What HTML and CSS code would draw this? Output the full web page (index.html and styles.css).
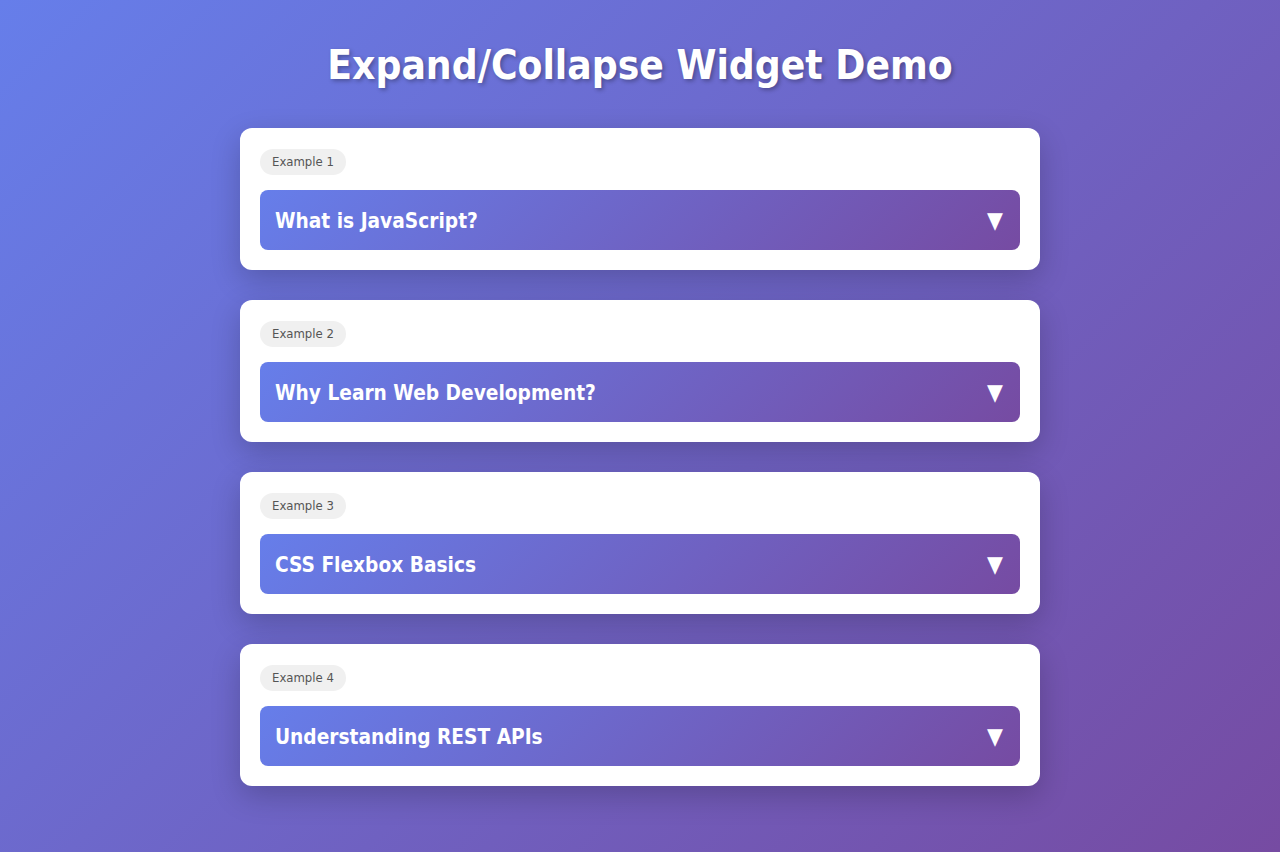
FILE: index.html
```html
<!DOCTYPE html>
<html lang="en">
<head>
<meta charset="utf-8">
<title>Expand/Collapse Widget Demo</title>
<link rel="stylesheet" href="styles.css">
</head>
<body>
<div class="page">
  <h1 class="title">Expand/Collapse Widget Demo</h1>
  <div class="list">
    <div class="card">
      <span class="badge">Example 1</span>
      <div class="header"><span class="label">What is JavaScript?</span><span class="arrow">▼</span></div>
    </div>
    <div class="card">
      <span class="badge">Example 2</span>
      <div class="header"><span class="label">Why Learn Web Development?</span><span class="arrow">▼</span></div>
    </div>
    <div class="card">
      <span class="badge">Example 3</span>
      <div class="header"><span class="label">CSS Flexbox Basics</span><span class="arrow">▼</span></div>
    </div>
    <div class="card">
      <span class="badge">Example 4</span>
      <div class="header"><span class="label">Understanding REST APIs</span><span class="arrow">▼</span></div>
    </div>
  </div>
</div>
</body>
</html>
```

FILE: styles.css
```css
html, body {
  margin: 0;
  padding: 0;
}
body {
  min-height: 852px;
  background: linear-gradient(135deg, #667eea 0%, #764ba2 100%);
  font-family: "DejaVu Sans Condensed", "DejaVu Sans", sans-serif;
}
.page {
  width: 800px;
  margin: 0 auto;
  padding: 42px 0 40px;
}
.title {
  margin: 0 0 38px;
  height: 48px;
  line-height: 48px;
  text-align: center;
  color: #fff;
  font-size: 40.3px;
  font-weight: bold;
  text-shadow: 2px 2px 4px rgba(0, 0, 0, 0.3);
}
.list {
  display: flex;
  flex-direction: column;
  gap: 30px;
}
.card {
  background: #fff;
  border-radius: 12px;
  padding: 20px;
  box-shadow: 0 10px 30px rgba(0, 0, 0, 0.2);
  display: flex;
  flex-direction: column;
  align-items: flex-start;
}
.badge {
  display: inline-block;
  height: 26px;
  line-height: 26px;
  padding: 0 12px;
  border-radius: 13px;
  background: #f0f0f0;
  color: #555;
  font-size: 13px;
  margin: 1px 0 15px;
}
.header {
  align-self: stretch;
  height: 60px;
  box-sizing: border-box;
  padding: 0 15px;
  border-radius: 8px;
  background: linear-gradient(135deg, #667eea 0%, #764ba2 100%);
  color: #fff;
  display: flex;
  align-items: center;
  justify-content: space-between;
}
.label {
  font-size: 20.7px;
  font-weight: bold;
  padding-top: 2px;
}
.arrow {
  font-size: 23px;
  line-height: 1;
  margin-right: 2px;
}
```
